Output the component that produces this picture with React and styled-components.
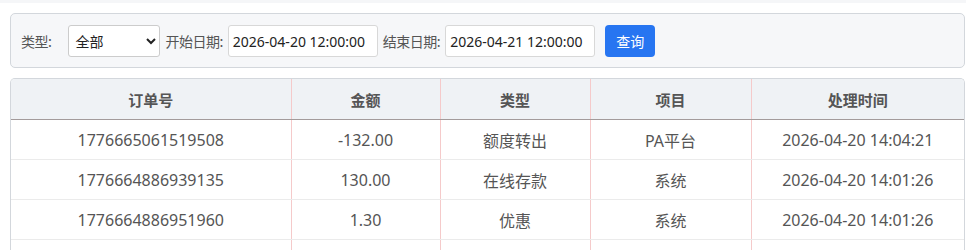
import styled, { createGlobalStyle } from "styled-components"

const GlobalStyle = createGlobalStyle`
  body {
    margin: 0;
    background: #fff;
    font-family: "Noto Sans", "Noto Sans CJK SC", sans-serif;
    color: #555;
  }
`

const rows = [
  { id: "1776665061519508", amount: "-132.00", type: "额度转出", item: "PA平台", time: "2026-04-20 14:04:21" },
  { id: "1776664886939135", amount: "130.00", type: "在线存款", item: "系统", time: "2026-04-20 14:01:26" },
  { id: "1776664886951960", amount: "1.30", type: "优惠", item: "系统", time: "2026-04-20 14:01:26" },
  { id: "more", amount: "", type: "", item: "", time: "" },
]

const columns = [
  { key: "id", title: "订单号", width: 280 },
  { key: "amount", title: "金额", width: 149 },
  { key: "type", title: "类型", width: 150 },
  { key: "item", title: "项目", width: 161 },
  { key: "time", title: "处理时间" },
]

function App() {
  return (
    <>
      <GlobalStyle />
      <TopStrip />
      <Page>
        <FilterBar>
          <Label $first>类型:</Label>
          <Select defaultValue="all">
            <option value="all">全部</option>
            <option value="in">在线存款</option>
            <option value="out">额度转出</option>
            <option value="bonus">优惠</option>
          </Select>
          <Label>开始日期:</Label>
          <DateInput defaultValue="2026-04-20 12:00:00" />
          <Label>结束日期:</Label>
          <DateInput defaultValue="2026-04-21 12:00:00" />
          <SearchButton>查询</SearchButton>
        </FilterBar>
        <TableWrap>
          <Table>
            <colgroup>
              {columns.map((c) => (
                <col key={c.key} style={c.width ? { width: c.width } : undefined} />
              ))}
            </colgroup>
            <thead>
              <tr>
                {columns.map((c) => (
                  <Th key={c.key}>{c.title}</Th>
                ))}
              </tr>
            </thead>
            <tbody>
              {rows.map((r) => (
                <tr key={r.id}>
                  {columns.map((c) => (
                    <Td key={c.key}>{r[c.key]}</Td>
                  ))}
                </tr>
              ))}
            </tbody>
          </Table>
        </TableWrap>
      </Page>
    </>
  )
}

const TopStrip = styled.div`
  height: 3px;
  background: #f5f6f8;
`

const Page = styled.main`
  padding: 10px 1px 0 10px;
  display: flex;
  flex-direction: column;
  gap: 10px;
`

const FilterBar = styled.div`
  display: flex;
  align-items: center;
  gap: 5px;
  padding: 11px 10px 10px;
  background: #f6f7f9;
  border: 1px solid #d3d7dc;
  border-radius: 5px;
`

const Label = styled.span`
  font-size: 14px;
  color: #555;
  letter-spacing: -0.5px;
  font-family: "Noto Sans CJK SC", sans-serif;
  margin-right: ${(p) => (p.$first ? "12px" : "0")};
`

const Select = styled.select`
  width: 92px;
  height: 32px;
  padding: 0 2px;
  font-size: 14px;
  font-family: "Noto Sans CJK SC", sans-serif;
  color: #222;
  background: #fff;
  border: 1px solid #ccc;
  border-radius: 3px;
`

const DateInput = styled.input`
  width: 150px;
  height: 32px;
  box-sizing: border-box;
  padding: 0 4px;
  font-size: 14px;
  font-family: "Noto Sans", sans-serif;
  color: #222;
  background: #fff;
  border: 1px solid #d8d8d8;
  border-radius: 3px;
  outline: none;
`

const SearchButton = styled.button`
  margin-left: 5px;
  width: 50px;
  height: 32px;
  font-size: 14px;
  font-family: "Noto Sans CJK SC", sans-serif;
  color: #fff;
  background: #2775f1;
  border: none;
  border-radius: 4px;
  cursor: pointer;
`

const TableWrap = styled.div`
  border: 1px solid #d3d7dc;
  border-bottom: none;
  border-radius: 5px 5px 0 0;
  overflow: hidden;
`

const Table = styled.table`
  width: 100%;
  border-collapse: collapse;
  table-layout: fixed;
`

const Th = styled.th`
  height: 40px;
  padding: 0;
  font-size: 15px;
  font-weight: 700;
  color: #555;
  font-family: "Noto Sans CJK SC", sans-serif;
  background: #eff2f5;
  border-bottom: 1px solid #a39b9b;
  border-right: 1px solid #f5caca;
  &:last-child {
    border-right: none;
  }
`

const Td = styled.td`
  height: 39px;
  padding: 0;
  text-align: center;
  font-size: 16px;
  color: #555;
  border-bottom: 1px solid #ebebeb;
  border-right: 1px solid #f5caca;
  &:last-child {
    border-right: none;
  }
`

export default App
